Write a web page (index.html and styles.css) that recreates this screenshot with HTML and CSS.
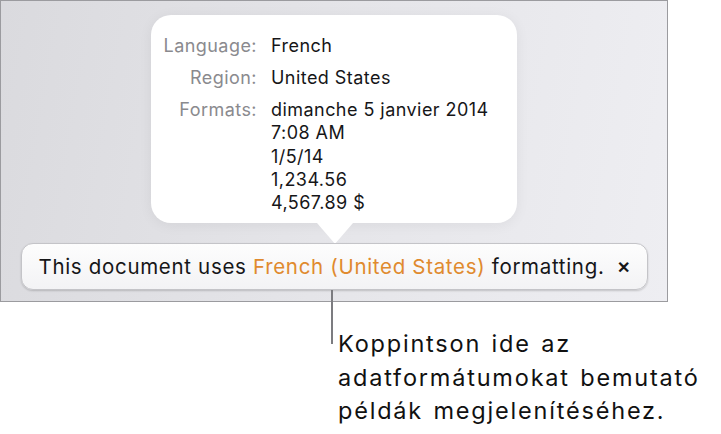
FILE: index.html
```html
<!DOCTYPE html>
<html lang="hu">
<head>
    <meta charset="UTF-8">
    <title>Formats</title>
    <link rel="stylesheet" href="styles.css">
</head>
<body>
    <div class="page">
        <section class="panel">
            <div class="popover">
                <div class="info">
                    <span class="label">Language:</span>
                    <span class="value">French</span>
                    <span class="label">Region:</span>
                    <span class="value">United States</span>
                    <span class="label">Formats:</span>
                    <span class="value value-list">dimanche 5 janvier 2014<br>7:08 AM<br>1/5/14<br>1,234.56<br>4,567.89 $</span>
                </div>
            </div>
            <div class="pointer"></div>
            <div class="notice">
                <p class="notice-text">This document uses <span class="link">French (United States)</span> formatting.</p>
                <span class="close">&#x2715;</span>
            </div>
        </section>

        <div class="callout">
            <p class="callout-text">Koppintson ide az<br>adatformátumokat bemutató<br>példák megjelenítéséhez.</p>
        </div>
    </div>
</body>
</html>
```

FILE: styles.css
```css
:root {
    --ink: #161618;
    --muted: #8a8a8e;
    --accent: #e08a2e;
    --frame: #9b9b9f;
}

* {
    margin: 0;
    padding: 0;
    box-sizing: border-box;
}

body {
    font-family: 'Inter', 'Liberation Sans', sans-serif;
    background: white;
    color: var(--ink);
    width: 721px;
    height: 434px;
    overflow: hidden;
}

.page {
    display: flex;
    flex-direction: column;
}

.panel {
    width: 668px;
    height: 302px;
    border: 1px solid var(--frame);
    background: linear-gradient(100deg, #dadade 0%, #e5e5e9 50%, #eeeef2 100%);
    display: flex;
    flex-direction: column;
    align-items: center;
    padding-top: 14px;
}

.popover {
    width: 366px;
    height: 208px;
    background: white;
    border-radius: 20px;
    box-shadow: 0 2px 14px rgb(0 0 0 / 0.06);
    padding: 19px 0 0 0;
}

.info {
    display: grid;
    grid-template-columns: 106px auto;
    column-gap: 14px;
    row-gap: 8px;
    font-size: 18px;
    line-height: 24px;
    letter-spacing: 0.45px;
}

.label {
    text-align: right;
    color: var(--muted);
}

.value {
    color: var(--ink);
}

.value-list {
    line-height: 23.3px;
}

.pointer {
    width: 36px;
    height: 20px;
    background: white;
    clip-path: polygon(0 0, 100% 0, 52% 100%, 48% 100%);
    margin-left: 2px;
}

.notice {
    width: 627px;
    height: 47px;
    border: 1px solid #c4c4c8;
    border-radius: 12px;
    background: linear-gradient(180deg, #fdfdfd 0%, #f3f3f5 100%);
    box-shadow: 0 1px 2px rgb(0 0 0 / 0.18);
    display: flex;
    align-items: center;
    justify-content: space-between;
    padding: 0 17px 0 17px;
}

.notice-text {
    font-size: 20.5px;
    letter-spacing: 0.68px;
    color: var(--ink);
}

.link {
    color: var(--accent);
}

.close {
    font-size: 16px;
    font-weight: 700;
}

.callout {
    position: relative;
    padding: 25px 0 0 338px;
}

.callout::before {
    content: '';
    position: absolute;
    left: 331px;
    top: -12px;
    width: 1.5px;
    height: 54px;
    background: #7c7c80;
}

.callout-text {
    font-size: 23.5px;
    line-height: 33.5px;
    letter-spacing: 1.8px;
    word-spacing: 2px;
    color: #111;
}
```
